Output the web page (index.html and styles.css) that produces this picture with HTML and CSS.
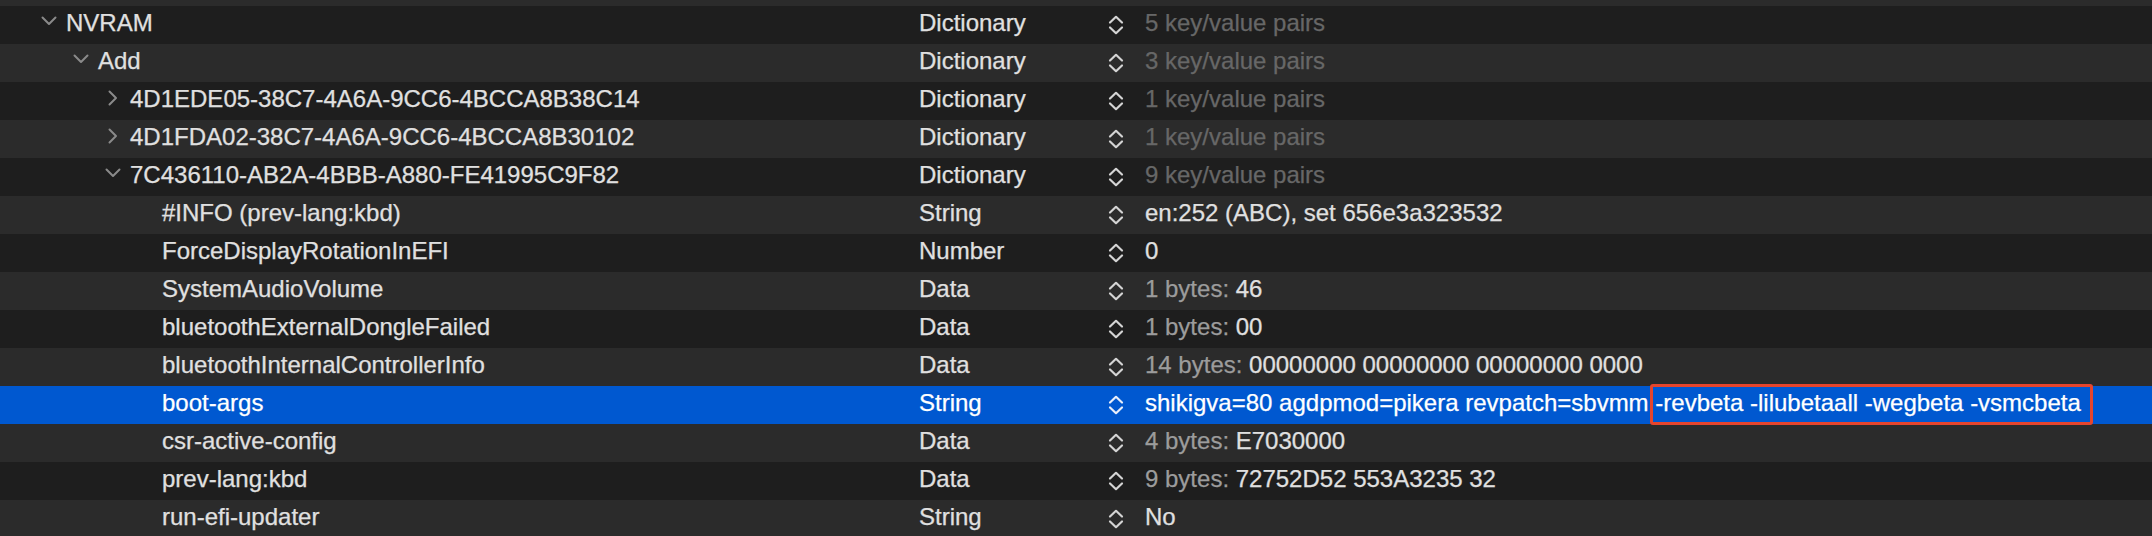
FILE: index.html
```html
<!DOCTYPE html>
<html>
<head>
<meta charset="utf-8">
<link rel="stylesheet" href="styles.css">
</head>
<body>
<svg class="defs" width="0" height="0" aria-hidden="true">
  <defs>
    <symbol id="stepper" viewBox="0 0 16 22">
      <polyline points="2,8.5 8,2.8 14,8.5" fill="none" stroke="currentColor" stroke-width="2.2" stroke-linecap="round" stroke-linejoin="round"/>
      <polyline points="2,13.5 8,19.2 14,13.5" fill="none" stroke="currentColor" stroke-width="2.2" stroke-linecap="round" stroke-linejoin="round"/>
    </symbol>
    <symbol id="chev-down" viewBox="0 0 16 10">
      <polyline points="1.5,1.5 8,8 14.5,1.5" fill="none" stroke="currentColor" stroke-width="2" stroke-linecap="round" stroke-linejoin="round"/>
    </symbol>
    <symbol id="chev-right" viewBox="0 0 10 16">
      <polyline points="1.5,1.5 8,8 1.5,14.5" fill="none" stroke="currentColor" stroke-width="2" stroke-linecap="round" stroke-linejoin="round"/>
    </symbol>
  </defs>
</svg>
<div class="outline">
  <div class="row light partial"></div>
  <div class="row dark">
    <div class="key l1"><span class="twisty"><svg class="cd"><use href="#chev-down"/></svg></span><span>NVRAM</span></div>
    <div class="type">Dictionary</div>
    <div class="step"><svg class="st"><use href="#stepper"/></svg></div>
    <div class="val dim">5 key/value pairs</div>
  </div>
  <div class="row light">
    <div class="key l2"><span class="twisty"><svg class="cd"><use href="#chev-down"/></svg></span><span>Add</span></div>
    <div class="type">Dictionary</div>
    <div class="step"><svg class="st"><use href="#stepper"/></svg></div>
    <div class="val dim">3 key/value pairs</div>
  </div>
  <div class="row dark">
    <div class="key l3"><span class="twisty"><svg class="cr"><use href="#chev-right"/></svg></span><span>4D1EDE05-38C7-4A6A-9CC6-4BCCA8B38C14</span></div>
    <div class="type">Dictionary</div>
    <div class="step"><svg class="st"><use href="#stepper"/></svg></div>
    <div class="val dim">1 key/value pairs</div>
  </div>
  <div class="row light">
    <div class="key l3"><span class="twisty"><svg class="cr"><use href="#chev-right"/></svg></span><span>4D1FDA02-38C7-4A6A-9CC6-4BCCA8B30102</span></div>
    <div class="type">Dictionary</div>
    <div class="step"><svg class="st"><use href="#stepper"/></svg></div>
    <div class="val dim">1 key/value pairs</div>
  </div>
  <div class="row dark">
    <div class="key l3"><span class="twisty"><svg class="cd"><use href="#chev-down"/></svg></span><span>7C436110-AB2A-4BBB-A880-FE41995C9F82</span></div>
    <div class="type">Dictionary</div>
    <div class="step"><svg class="st"><use href="#stepper"/></svg></div>
    <div class="val dim">9 key/value pairs</div>
  </div>
  <div class="row light">
    <div class="key l4"><span class="twisty"></span><span>#INFO (prev-lang:kbd)</span></div>
    <div class="type">String</div>
    <div class="step"><svg class="st"><use href="#stepper"/></svg></div>
    <div class="val">en:252 (ABC), set 656e3a323532</div>
  </div>
  <div class="row dark">
    <div class="key l4"><span class="twisty"></span><span>ForceDisplayRotationInEFI</span></div>
    <div class="type">Number</div>
    <div class="step"><svg class="st"><use href="#stepper"/></svg></div>
    <div class="val">0</div>
  </div>
  <div class="row light">
    <div class="key l4"><span class="twisty"></span><span>SystemAudioVolume</span></div>
    <div class="type">Data</div>
    <div class="step"><svg class="st"><use href="#stepper"/></svg></div>
    <div class="val"><span class="pre">1 bytes:</span> 46</div>
  </div>
  <div class="row dark">
    <div class="key l4"><span class="twisty"></span><span>bluetoothExternalDongleFailed</span></div>
    <div class="type">Data</div>
    <div class="step"><svg class="st"><use href="#stepper"/></svg></div>
    <div class="val"><span class="pre">1 bytes:</span> 00</div>
  </div>
  <div class="row light">
    <div class="key l4"><span class="twisty"></span><span>bluetoothInternalControllerInfo</span></div>
    <div class="type">Data</div>
    <div class="step"><svg class="st"><use href="#stepper"/></svg></div>
    <div class="val"><span class="pre">14 bytes:</span> 00000000 00000000 00000000 0000</div>
  </div>
  <div class="row selected">
    <div class="key l4"><span class="twisty"></span><span>boot-args</span></div>
    <div class="type">String</div>
    <div class="step"><svg class="st"><use href="#stepper"/></svg></div>
    <div class="val">shikigva=80 agdpmod=pikera revpatch=sbvmm<span class="hl"> -revbeta -lilubetaall -wegbeta -vsmcbeta</span></div>
  </div>
  <div class="row light">
    <div class="key l4"><span class="twisty"></span><span>csr-active-config</span></div>
    <div class="type">Data</div>
    <div class="step"><svg class="st"><use href="#stepper"/></svg></div>
    <div class="val"><span class="pre">4 bytes:</span> E7030000</div>
  </div>
  <div class="row dark">
    <div class="key l4"><span class="twisty"></span><span>prev-lang:kbd</span></div>
    <div class="type">Data</div>
    <div class="step"><svg class="st"><use href="#stepper"/></svg></div>
    <div class="val"><span class="pre">9 bytes:</span> 72752D52 553A3235 32</div>
  </div>
  <div class="row light">
    <div class="key l4"><span class="twisty"></span><span>run-efi-updater</span></div>
    <div class="type">String</div>
    <div class="step"><svg class="st"><use href="#stepper"/></svg></div>
    <div class="val">No</div>
  </div>
</div>
</body>
</html>
```
FILE: styles.css
```css
html, body {
  margin: 0;
  padding: 0;
  background: #1e1e1e;
  height: 536px;
  overflow: hidden;
}
.defs {
  position: absolute;
  width: 0;
  height: 0;
}
.outline {
  font-family: "Liberation Sans", Arial, sans-serif;
  font-size: 24px;
  color: #e0e0e0;
  -webkit-text-stroke: 0.25px currentColor;
}
.row {
  display: grid;
  grid-template-columns: 919px 189px 37px 1fr;
  height: 38px;
  line-height: 33px;
  padding-bottom: 5px;
  box-sizing: border-box;
  white-space: nowrap;
}
.row.partial {
  height: 6px;
  padding: 0;
}
.row.dark { background: #1e1e1e; }
.row.light { background: #2b2b2b; }
.row.selected { background: #0058d0; color: #ffffff; }
.key {
  display: flex;
  align-items: flex-start;
}
.key.l1 { padding-left: 34px; }
.key.l2 { padding-left: 66px; }
.key.l3 { padding-left: 98px; }
.key.l4 { padding-left: 130px; }
.twisty {
  width: 32px;
  height: 33px;
  display: flex;
  align-items: center;
  justify-content: center;
  padding-right: 2px;
  box-sizing: border-box;
  color: #8a8a8a;
}
.cd {
  width: 16px;
  height: 10px;
  margin-top: -3px;
}
.cr {
  width: 10px;
  height: 16px;
  margin-top: -1px;
}
.step {
  display: flex;
  align-items: center;
  height: 38px;
  color: #d4d4d4;
}
.selected .step { color: #e8eefa; }
.st {
  width: 16px;
  height: 22px;
}
.val.dim { color: #676767; }
.pre { color: #9c9c9c; }
.hl {
  position: relative;
}
.hl::after {
  content: "";
  position: absolute;
  left: 1px;
  right: -12px;
  top: -5px;
  bottom: -9px;
  border: 3px solid #e6452c;
  border-radius: 3px;
}
```
